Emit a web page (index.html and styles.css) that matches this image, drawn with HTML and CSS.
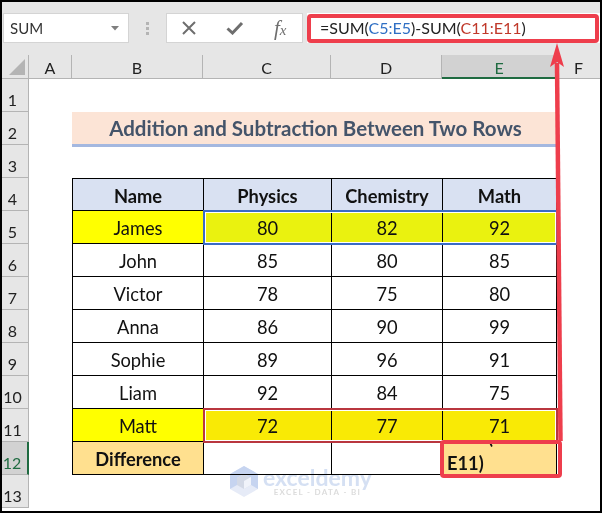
FILE: index.html
```html
<!DOCTYPE html>
<html lang="en">
<head>
    <meta charset="UTF-8">
    <title>Addition and Subtraction Between Two Rows</title>
    <link rel="stylesheet" href="styles.css">
</head>
<body>
    <div class="window">
        <div class="formula-bar">
            <div class="name-box">
                <span>SUM</span>
                <svg class="caret" width="9" height="5" viewBox="0 0 9 5"><path d="M0 0H8L4 4.5Z" fill="#7f7f7f"/></svg>
            </div>
            <div class="handle"><i></i><i></i><i></i></div>
            <div class="fx-buttons">
                <svg width="16" height="14" viewBox="0 0 16 14"><path d="M2 1L14 13M14 1L2 13" stroke="#6e6e6e" stroke-width="2" fill="none"/></svg>
                <svg width="18" height="14" viewBox="0 0 18 14"><path d="M1.5 7.5L6.5 12L16 2" stroke="#6e6e6e" stroke-width="3" fill="none"/></svg>
                <span class="fx">f<sub>x</sub></span>
            </div>
            <div class="formula">=SUM(<span class="ref-blue">C5:E5</span>)-SUM(<span class="ref-red">C11:E11</span>)</div>
        </div>

        <div class="sheet">
            <div class="corner"><svg width="16" height="16" viewBox="0 0 16 16"><path d="M16 0V16H0Z" fill="#b4b4b4"/></svg></div>
            <div class="col-head">A</div>
            <div class="col-head">B</div>
            <div class="col-head">C</div>
            <div class="col-head">D</div>
            <div class="col-head active">E</div>
            <div class="col-head last">F</div>

            <div class="row-head">1</div>
            <div class="blank wide"></div>

            <div class="row-head">2</div>
            <div class="blank"></div>
            <div class="title">Addition and Subtraction Between Two Rows</div>
            <div class="blank"></div>

            <div class="row-head">3</div>
            <div class="blank wide"></div>

            <div class="row-head">4</div>
            <div class="blank"></div>
            <div class="cell head">Name</div>
            <div class="cell head">Physics</div>
            <div class="cell head">Chemistry</div>
            <div class="cell head end">Math</div>
            <div class="blank"></div>

            <div class="row-head">5</div>
            <div class="blank"></div>
            <div class="cell name-hl">James</div>
            <div class="cell lime">80</div>
            <div class="cell lime">82</div>
            <div class="cell lime end">92</div>
            <div class="blank"></div>

            <div class="row-head">6</div>
            <div class="blank"></div>
            <div class="cell">John</div>
            <div class="cell">85</div>
            <div class="cell">80</div>
            <div class="cell end">85</div>
            <div class="blank"></div>

            <div class="row-head">7</div>
            <div class="blank"></div>
            <div class="cell">Victor</div>
            <div class="cell">78</div>
            <div class="cell">75</div>
            <div class="cell end">80</div>
            <div class="blank"></div>

            <div class="row-head">8</div>
            <div class="blank"></div>
            <div class="cell">Anna</div>
            <div class="cell">86</div>
            <div class="cell">90</div>
            <div class="cell end">99</div>
            <div class="blank"></div>

            <div class="row-head">9</div>
            <div class="blank"></div>
            <div class="cell">Sophie</div>
            <div class="cell">89</div>
            <div class="cell">96</div>
            <div class="cell end">91</div>
            <div class="blank"></div>

            <div class="row-head">10</div>
            <div class="blank"></div>
            <div class="cell">Liam</div>
            <div class="cell">92</div>
            <div class="cell">84</div>
            <div class="cell end">75</div>
            <div class="blank"></div>

            <div class="row-head">11</div>
            <div class="blank"></div>
            <div class="cell name-hl">Matt</div>
            <div class="cell gold">72</div>
            <div class="cell gold">77</div>
            <div class="cell gold end">71</div>
            <div class="blank"></div>

            <div class="row-head active">12</div>
            <div class="blank"></div>
            <div class="cell diff">Difference</div>
            <div class="cell"></div>
            <div class="cell"></div>
            <div class="cell diff-result end"><span class="cut-line">SUM(C11:</span><span>E11)</span></div>
            <div class="blank"></div>

            <div class="row-head">13</div>
            <div class="blank wide"></div>
        </div>

        <!-- selection ranges and annotations sit on top of the sheet -->
        <div class="range range-blue"></div>
        <div class="range range-red"></div>
        <div class="mark mark-formula"></div>
        <div class="mark mark-cell"></div>
        <svg class="arrow" width="24" height="402" viewBox="0 0 24 402">
            <path d="M9 20L12.5 398" stroke="#ee3e4c" stroke-width="4.5" fill="none"/>
            <path d="M9 0L16 24L9 19L2 24Z" fill="#ee3e4c"/>
        </svg>
        <div class="watermark">
            <svg width="28" height="31" viewBox="0 0 28 31">
                <path d="M14 0L28 8V23L14 31L0 23V8Z" fill="#e6ebf7"/>
                <path d="M14 0L28 8V23L21 19V12L14 8L7 12V19L0 23V8Z" fill="#c6d4f0"/>
                <path d="M7 12L14 8L21 12V19L14 23L7 19Z" fill="#d3d9e6"/>
                <path d="M14 15L21 11V19L14 23Z" fill="#f0f3fa"/>
            </svg>
            <div class="wm-text">
                <div class="wm-name">exceldemy</div>
                <div class="wm-sub">EXCEL - DATA - BI</div>
            </div>
        </div>
    </div>
</body>
</html>
```

FILE: styles.css
```css
* {
    margin: 0;
    padding: 0;
    box-sizing: border-box;
}

body {
    font-family: 'Lato', 'Liberation Sans', sans-serif;
    background: black;
}

.window {
    position: relative;
    width: 602px;
    height: 513px;
    border: 2px solid black;
    background: white;
    overflow: hidden;
}

/* formula bar */

.formula-bar {
    display: flex;
    align-items: center;
    height: 53px;
    padding: 0 0 0 1px;
    background: #e6e6e6;
}

.name-box {
    display: flex;
    align-items: center;
    justify-content: space-between;
    width: 126px;
    height: 30px;
    margin-top: -1px;
    padding: 0 8px 0 6px;
    background: white;
    border: 1px solid #d4d4d4;
    font-size: 15px;
    color: #333;
}

.handle {
    display: flex;
    flex-direction: column;
    gap: 2px;
    margin: 0 17px 0 17px;
}

.handle i {
    display: block;
    width: 3px;
    height: 3px;
    background: #b4b4b4;
}

.fx-buttons {
    display: flex;
    align-items: center;
    gap: 29px;
    width: 137px;
    height: 30px;
    margin-top: -1px;
    padding-left: 14px;
    background: white;
    border: 1px solid #d4d4d4;
}

.fx {
    margin-left: 1px;
    font-family: 'Liberation Serif', serif;
    font-style: italic;
    font-size: 21px;
    line-height: 24px;
    color: #6e6e6e;
}

.fx sub {
    font-size: 15px;
    line-height: 0;
    vertical-align: 0;
}

.formula {
    flex: 1;
    height: 30px;
    margin: -1px 0 0 4px;
    padding-left: 13px;
    background: white;
    font-size: 16px;
    line-height: 30px;
    color: #222;
}

.ref-blue {
    color: #2f6fc4;
}

.ref-red {
    color: #c0392b;
}

/* sheet grid */

.sheet {
    display: grid;
    grid-template-columns: 27px 43px 131px 128px 111px 115px 43px;
    grid-template-rows: 24px repeat(13, 33px);
}

.corner {
    display: flex;
    align-items: flex-end;
    justify-content: flex-end;
    padding: 0 3px 3px 0;
    background: #e6e6e6;
    border-right: 1px solid #b4b4b4;
    border-bottom: 1px solid #b4b4b4;
}

.col-head {
    display: flex;
    align-items: center;
    justify-content: center;
    padding-top: 2px;
    background: #e6e6e6;
    border-right: 1px solid #b4b4b4;
    border-bottom: 1px solid #b4b4b4;
    font-size: 16px;
    color: #222;
}

.col-head.active {
    background: #d2d2d2;
    border-bottom: 2px solid #1f6b41;
    color: #1f6b41;
}

.col-head.last {
    border-right: none;
}

.row-head {
    display: flex;
    align-items: center;
    justify-content: center;
    padding: 8px 5px 0 0;
    background: #e6e6e6;
    border-right: 1px solid #b4b4b4;
    border-bottom: 1px solid #b4b4b4;
    font-size: 16px;
    color: #222;
}

.row-head.active {
    background: #d2d2d2;
    border-right: 2px solid #1f6b41;
    color: #1f6b41;
}

.blank.wide {
    grid-column: span 6;
}

.title {
    grid-column: span 4;
    display: flex;
    align-items: center;
    justify-content: center;
    margin-bottom: -2px;
    padding: 0 0 0 2px;
    background: #fce4d6;
    border-bottom: 3px solid #a4b8e0;
    font-size: 20.5px;
    font-weight: bold;
    color: #44546a;
}

.cell {
    display: flex;
    align-items: center;
    justify-content: center;
    padding-top: 2px;
    border-left: 1px solid black;
    border-bottom: 1px solid black;
    font-size: 18.3px;
    color: #111;
}

.cell.end {
    border-right: 1px solid black;
}

.cell.head {
    background: #d9e1f2;
    border-top: 1px solid black;
    font-weight: bold;
}

.name-hl {
    background: #ffff00;
}

.lime {
    background: #eaf20f;
}

.gold {
    background: #f9ea05;
}

.diff {
    background: #ffe08f;
    font-weight: bold;
}

.diff-result {
    flex-direction: column;
    align-items: flex-start;
    justify-content: flex-end;
    padding: 0 0 0 4px;
    background: #ffe08f;
    font-weight: bold;
    line-height: 22px;
    overflow: hidden;
}

.cut-line {
    margin-bottom: 4px;
}

/* overlays */

.range {
    position: absolute;
    left: 201px;
    width: 355px;
    border: 2px solid;
    box-shadow: inset 0 0 0 1px white;
}

.range-blue {
    top: 208px;
    height: 35px;
    border-color: #3a6bc5;
}

.range-red {
    top: 406px;
    height: 35px;
    border-color: #b9363f;
}

.mark {
    position: absolute;
    border: 4px solid #ee3e4c;
    border-radius: 4px;
}

.mark-formula {
    top: 12px;
    left: 305px;
    width: 292px;
    height: 29px;
}

.mark-cell {
    top: 438px;
    left: 438px;
    width: 122px;
    height: 38px;
}

.arrow {
    position: absolute;
    top: 41px;
    left: 546px;
}

.watermark {
    position: absolute;
    top: 464px;
    left: 228px;
    display: flex;
    gap: 5px;
    mix-blend-mode: multiply;
}

.wm-name {
    font-size: 23px;
    line-height: 22px;
    font-weight: bold;
    color: #d5e0f3;
}

.wm-sub {
    font-size: 8px;
    line-height: 9px;
    font-weight: bold;
    letter-spacing: 1.3px;
    text-align: center;
    color: #dcdcdc;
}
```
